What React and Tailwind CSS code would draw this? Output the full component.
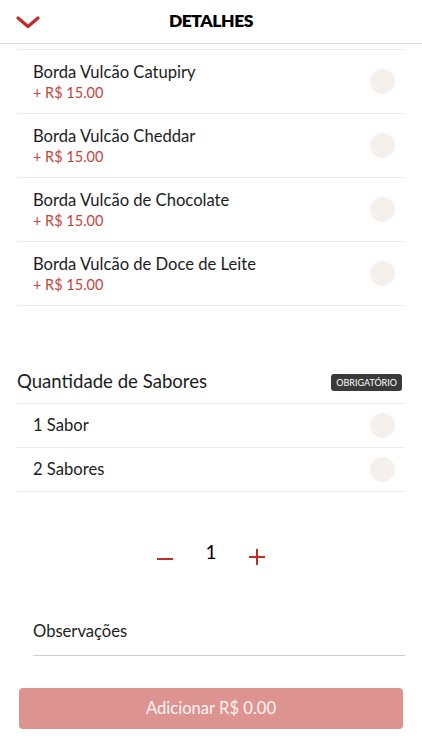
import React, { useState } from 'react';

const bordas = [
  'Borda Vulcão Catupiry',
  'Borda Vulcão Cheddar',
  'Borda Vulcão de Chocolate',
  'Borda Vulcão de Doce de Leite',
];

const sabores = ['1 Sabor', '2 Sabores'];

const Radio = () => <span className="h-[25px] w-[25px] shrink-0 rounded-full bg-[#f6f0ed]" />;

const App = () => {
  const [qty, setQty] = useState(1);

  return (
    <div className="min-h-[750px] bg-white font-['Lato',sans-serif] text-[#1c1c1c]">
      <header className="relative flex h-[44px] items-center justify-center border-b border-[#dedede]">
        <button className="absolute left-[15px] top-[14px] text-[#c62a24]">
          <svg width="26" height="16" viewBox="0 0 26 16" fill="none" stroke="currentColor" strokeWidth="3.2" strokeLinecap="round" strokeLinejoin="round">
            <path d="M3 4l10 8.5L23 4" />
          </svg>
        </button>
        <h1 className="text-[17.5px] font-extrabold tracking-tight text-black">DETALHES</h1>
      </header>

      <div className="mx-[17px] mt-[5px] border-t border-[#ececec]" />
      <div className="mx-[17px]">
        {bordas.map((name) => (
          <div key={name} className="flex h-[64px] items-center justify-between border-b border-[#ececec] pl-[16px] pr-[10px]">
            <div className="pt-[1px]">
              <p className="text-[16.6px] leading-[22px]">{name}</p>
              <p className="text-[14.5px] leading-[20px] text-[#c9443d]">+ R$ 15.00</p>
            </div>
            <Radio />
          </div>
        ))}
      </div>

      <div className="mx-[17px] mt-[55px]">
        <div className="flex h-[43px] items-center justify-between border-b border-[#ececec]">
          <h2 className="text-[18.6px]">Quantidade de Sabores</h2>
          <span className="mr-[3px] rounded-[3px] bg-[#3a3a3a] px-[5px] py-[3px] text-[9px] leading-[11px] text-white">OBRIGATÓRIO</span>
        </div>
        {sabores.map((s) => (
          <div key={s} className="flex h-[44px] items-center justify-between border-b border-[#ececec] pl-[16px] pr-[10px]">
            <p className="text-[16.6px]">{s}</p>
            <Radio />
          </div>
        ))}
      </div>

      <div className="mt-[48px] flex items-start justify-center gap-[32px]">
        <button onClick={() => setQty(Math.max(1, qty - 1))} className="mt-[17px] text-[#c62a24]">
          <svg width="16" height="4" viewBox="0 0 16 4"><rect x="0" y="1" width="16" height="2" fill="currentColor" /></svg>
        </button>
        <span className="text-[19px] leading-[24px] text-black">{qty}</span>
        <button onClick={() => setQty(qty + 1)} className="mt-[9px] text-[#c62a24]">
          <svg width="16" height="16" viewBox="0 0 16 16"><rect x="0" y="7" width="16" height="2" fill="currentColor" /><rect x="7" y="0" width="2" height="16" fill="currentColor" /></svg>
        </button>
      </div>

      <div className="ml-[33px] mr-[17px] mt-[54px] border-b border-[#cfcfcf] pb-[11px]">
        <p className="text-[16.6px]">Observações</p>
      </div>

      <div className="px-[19px] pt-[32px]">
        <button className="h-[41px] w-full rounded-[4px] bg-[#dd9390] text-[16.6px] text-white/90">Adicionar R$ 0.00</button>
      </div>
    </div>
  );
};

export default App;
